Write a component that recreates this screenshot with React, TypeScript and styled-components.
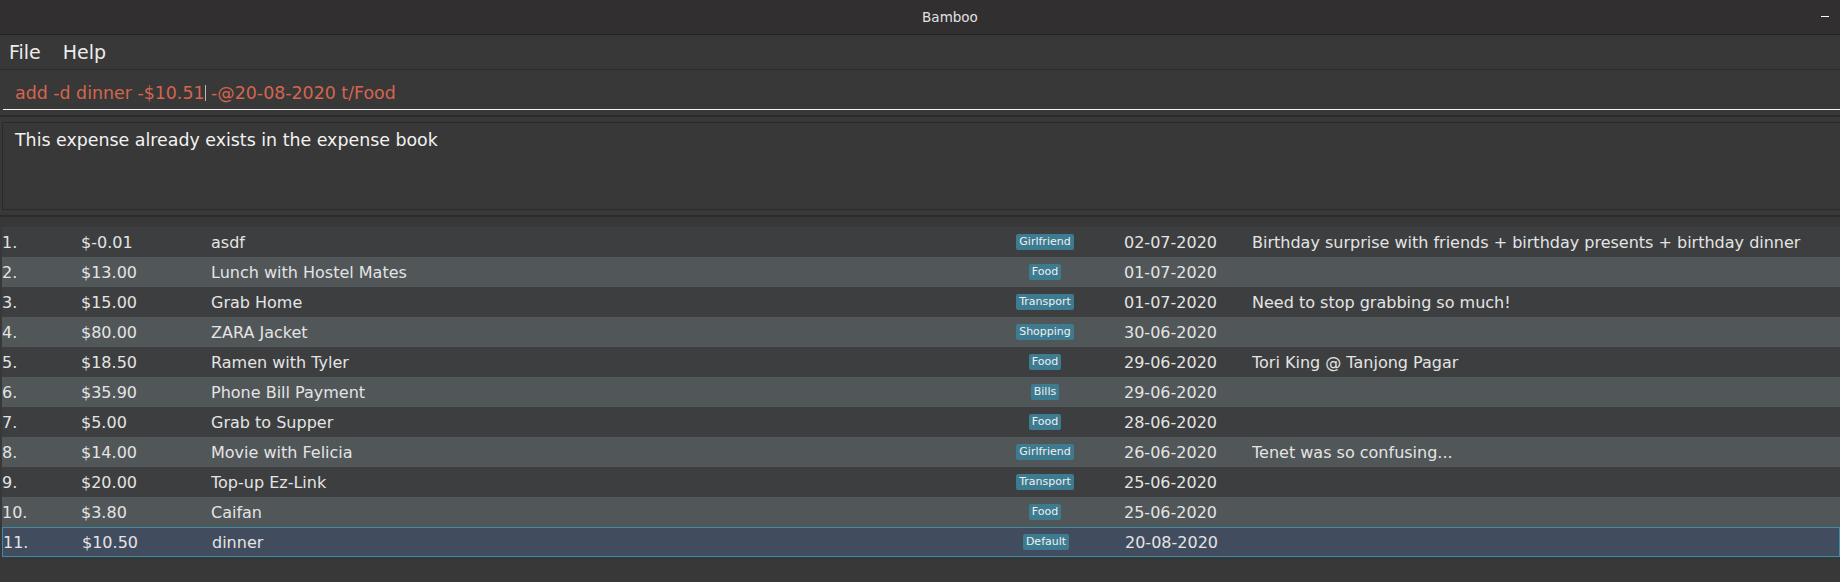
import React from "react";
import styled, { createGlobalStyle } from "styled-components";

const GlobalStyle = createGlobalStyle`
  html, body {
    margin: 0;
    padding: 0;
    background: #383838;
    overflow: hidden;
  }
  body {
    font-family: "DejaVu Sans", "Liberation Sans", sans-serif;
  }
`;

const Window = styled.div`
  width: 1840px;
  height: 582px;
  background: #383838;
  display: flex;
  flex-direction: column;
  overflow: hidden;
`;

const TitleBar = styled.div`
  height: 34px;
  flex: none;
  display: flex;
  align-items: center;
  background: #312f30;
  border-bottom: 1px solid #232323;
`;

const Title = styled.div`
  flex: 1;
  text-align: center;
  padding-left: 79px;
  font-size: 13.5px;
  color: #e2e2e2;
`;

const Minimize = styled.span`
  width: 8px;
  height: 1.5px;
  background: #ffffff;
  margin-right: 11px;
  margin-bottom: 1px;
`;

const MenuBar = styled.div`
  height: 34px;
  flex: none;
  display: flex;
  align-items: center;
  gap: 22px;
  padding-left: 9px;
  border-bottom: 1px solid #2c2c2c;
`;

const MenuItem = styled.span`
  font-size: 19px;
  color: #ececec;
`;

const CommandBox = styled.div`
  flex: none;
  margin-left: 3px;
  padding: 13px 0 0 12px;
  height: 26px;
  border-bottom: 1px solid #f4f4f4;
  font-size: 17.4px;
  color: #d4654e;
  white-space: pre;
  display: flex;
  align-items: flex-start;
`;

const Caret = styled.span`
  display: inline-block;
  width: 1px;
  height: 16px;
  margin-top: 2px;
  background: #b8b8b8;
`;

const Divider = styled.div<{ $above: number; $below: number }>`
  flex: none;
  height: 2px;
  background: #2b2b2b;
  margin-top: ${(p) => p.$above}px;
  margin-bottom: ${(p) => p.$below}px;
`;

const ResultBox = styled.div`
  flex: none;
  margin-left: 2px;
  border: 1px solid #2a2a2a;
  border-right: none;
  padding: 7px 0 0 12px;
  box-sizing: border-box;
  height: 88px;
  font-size: 17.4px;
  color: #f2f2f2;
`;

const List = styled.div`
  flex: none;
  display: flex;
  flex-direction: column;
  padding-left: 2px;
`;

const Row = styled.div<{ $even: boolean; $selected: boolean }>`
  height: 30px;
  box-sizing: border-box;
  display: grid;
  grid-template-columns: 79px 130px 755px 158px 128px 1fr;
  align-items: center;
  font-size: 16px;
  color: #e4e4e4;
  white-space: nowrap;
  background: ${(p) =>
    p.$selected ? "#414c5f" : p.$even ? "#515658" : "#3c3e3f"};
  border: ${(p) => (p.$selected ? "1px solid #3b8ea5" : "none")};
`;

const Cell = styled.span`
  overflow: hidden;
`;

const TagCell = styled.span`
  display: flex;
  justify-content: center;
`;

const Tag = styled.span`
  height: 16px;
  line-height: 16px;
  padding: 0 3px;
  border-radius: 2px;
  background: #3d7b90;
  color: #f0f0f0;
  font-size: 11px;
`;

type Expense = {
  amount: string;
  desc: string;
  tag: string;
  date: string;
  remark?: string;
};

const expenses: Expense[] = [
  {
    amount: "$-0.01",
    desc: "asdf",
    tag: "Girlfriend",
    date: "02-07-2020",
    remark: "Birthday surprise with friends + birthday presents + birthday dinner",
  },
  { amount: "$13.00", desc: "Lunch with Hostel Mates", tag: "Food", date: "01-07-2020" },
  {
    amount: "$15.00",
    desc: "Grab Home",
    tag: "Transport",
    date: "01-07-2020",
    remark: "Need to stop grabbing so much!",
  },
  { amount: "$80.00", desc: "ZARA Jacket", tag: "Shopping", date: "30-06-2020" },
  {
    amount: "$18.50",
    desc: "Ramen with Tyler",
    tag: "Food",
    date: "29-06-2020",
    remark: "Tori King @ Tanjong Pagar",
  },
  { amount: "$35.90", desc: "Phone Bill Payment", tag: "Bills", date: "29-06-2020" },
  { amount: "$5.00", desc: "Grab to Supper", tag: "Food", date: "28-06-2020" },
  {
    amount: "$14.00",
    desc: "Movie with Felicia",
    tag: "Girlfriend",
    date: "26-06-2020",
    remark: "Tenet was so confusing...",
  },
  { amount: "$20.00", desc: "Top-up Ez-Link", tag: "Transport", date: "25-06-2020" },
  { amount: "$3.80", desc: "Caifan", tag: "Food", date: "25-06-2020" },
  { amount: "$10.50", desc: "dinner", tag: "Default", date: "20-08-2020" },
];

export default function App() {
  const selected = expenses.length - 1;
  return (
    <>
      <GlobalStyle />
      <Window>
        <TitleBar>
          <Title>Bamboo</Title>
          <Minimize />
        </TitleBar>
        <MenuBar>
          <MenuItem>File</MenuItem>
          <MenuItem>Help</MenuItem>
        </MenuBar>
        <CommandBox>
          <span>add -d dinner -$10.51</span>
          <Caret />
          <span> -@20-08-2020 t/Food</span>
        </CommandBox>
        <Divider $above={5} $below={5} />
        <ResultBox>This expense already exists in the expense book</ResultBox>
        <Divider $above={5} $below={10} />
        <List>
          {expenses.map((e, i) => (
            <Row key={i} $even={i % 2 === 1} $selected={i === selected}>
              <Cell>{i + 1}.</Cell>
              <Cell>{e.amount}</Cell>
              <Cell>{e.desc}</Cell>
              <TagCell>
                <Tag>{e.tag}</Tag>
              </TagCell>
              <Cell>{e.date}</Cell>
              <Cell>{e.remark ?? ""}</Cell>
            </Row>
          ))}
        </List>
      </Window>
    </>
  );
}
